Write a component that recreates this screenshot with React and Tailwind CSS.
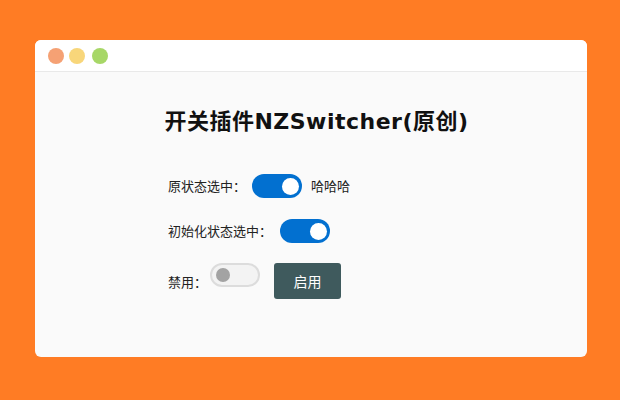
export default function App() {
  const cjk = { fontFamily: '"Microsoft YaHei", "Noto Sans CJK SC", "Noto Sans", sans-serif' };
  const titleFont = { fontFamily: '"DejaVu Sans", "Noto Sans CJK SC", sans-serif' };

  return (
    <div className="w-[620px] h-[400px] bg-[#ff7c24] pt-[40px] pl-[35px]" style={cjk}>
      <div className="w-[552px] h-[317px] rounded-[6px] bg-[#fafafa] overflow-hidden flex flex-col">
        {/* barre de titre */}
        <div className="h-[32px] shrink-0 bg-white border-b border-[#e9e9e9] flex items-center pl-[13px]">
          <span className="w-[16px] h-[16px] rounded-full bg-[#f5a174]" />
          <span className="w-[16px] h-[16px] rounded-full bg-[#f8d67a] ml-[5px]" />
          <span className="w-[16px] h-[16px] rounded-full bg-[#a7d767] ml-[7px]" />
        </div>

        <div className="pt-[35px]">
          <h1 className="text-center pl-[11px] text-[22px] leading-[30px] font-bold tracking-[0.5px] text-[#111]" style={titleFont}>开关插件NZSwitcher(原创)</h1>

          <div className="pl-[133px] mt-[37px] text-[13px] text-[#222]">
            <div className="flex items-center h-[24px]">
              <span>原状态选中：</span>
              <div className="ml-[6px] w-[50px] h-[24px] rounded-full bg-[#0270d0] flex items-center justify-end pr-[3px]">
                <span className="w-[17px] h-[17px] rounded-full bg-white" />
              </div>
              <span className="ml-[9px]">哈哈哈</span>
            </div>

            <div className="flex items-center h-[24px] mt-[21px]">
              <span>初始化状态选中：</span>
              <div className="ml-[8px] w-[50px] h-[24px] rounded-full bg-[#0270d0] flex items-center justify-end pr-[3px]">
                <span className="w-[17px] h-[17px] rounded-full bg-white" />
              </div>
            </div>

            <div className="flex items-start mt-[20px]">
              <span className="mt-[9px]">禁用：</span>
              <div className="ml-[3px] w-[50px] h-[24px] rounded-full bg-[#f3f3f3] border-2 border-[#dcdcdc] flex items-center pl-[4px]">
                <span className="w-[14px] h-[14px] rounded-full bg-[#a3a3a3]" />
              </div>
              <button className="ml-[14px] w-[67px] h-[36px] rounded-[3px] bg-[#3f5a5d] text-white text-[14px]">启用</button>
            </div>
          </div>
        </div>
      </div>
    </div>
  );
}
